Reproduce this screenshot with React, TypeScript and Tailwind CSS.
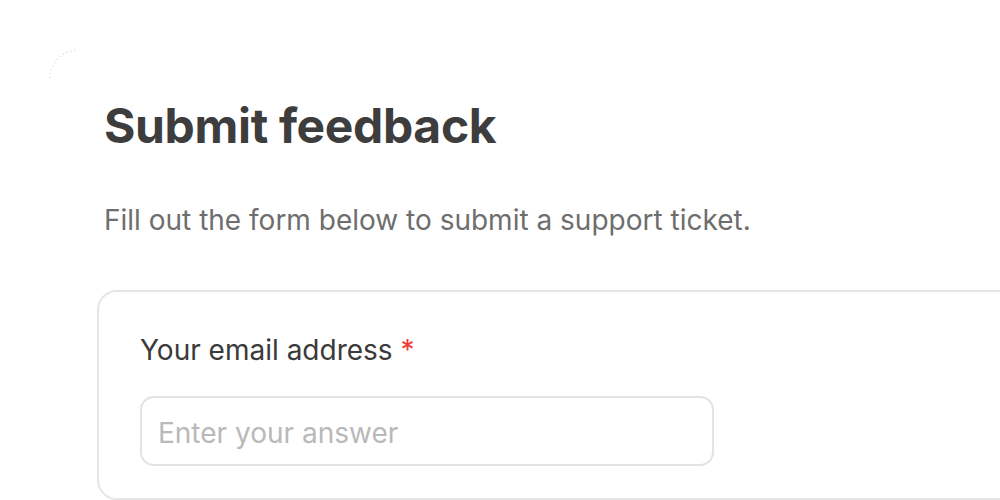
export default function App() {
  return (
    <div className="relative h-[500px] w-[1000px] overflow-hidden bg-white font-['Inter',sans-serif]">
      {/* faint loading arc in the corner */}
      <svg className="absolute left-0 top-0" width="100" height="100" viewBox="0 0 100 100" aria-hidden="true">
        <path
          d="M50 78 A28 28 0 0 1 78 50"
          fill="none"
          stroke="#d4d4d4"
          strokeWidth="1.2"
          strokeDasharray="1 3"
        />
      </svg>

      <div className="pl-[104px] pt-[97px]">
        <h1 className="text-[48px] font-bold leading-[58px] tracking-[-0.35px] text-[#3d3d3d]">
          Submit feedback
        </h1>
        <p className="mt-[47px] text-[28px] leading-[36px] text-[#6e6e6e]">
          Fill out the form below to submit a support ticket.
        </p>
      </div>

      <div className="ml-[97px] mt-[52px] h-[210px] w-[960px] rounded-[20px] border-2 border-[#e6e6e6] bg-white pl-[41px] pt-[40px]">
        <label className="block text-[28px] leading-[36px] text-[#3a3a3a]">
          Your email address <span className="text-[#f03a3a]">*</span>
        </label>
        <div className="mt-[28px] flex h-[70px] w-[574px] items-center rounded-[14px] border-2 border-[#e3e3e3] bg-white pl-[16px] pt-[4px]">
          <input
            type="text"
            placeholder="Enter your answer"
            className="w-full bg-transparent text-[28px] text-[#3a3a3a] outline-none placeholder:text-[#b9b9b9]"
          />
        </div>
      </div>
    </div>
  );
}
